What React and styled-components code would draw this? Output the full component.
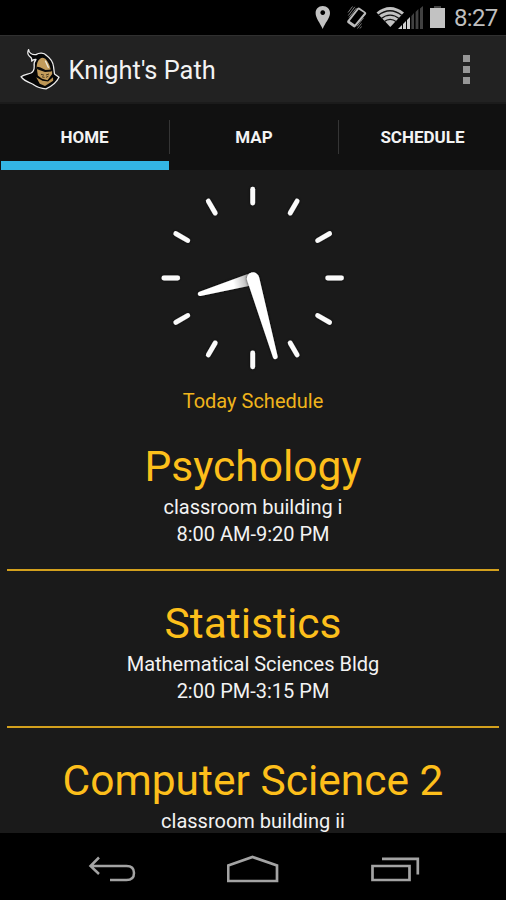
import React from "react";
import styled, { createGlobalStyle } from "styled-components";

const GlobalStyle = createGlobalStyle`
  * { box-sizing: border-box; }
  body { margin: 0; background: #000; font-family: Roboto, "Liberation Sans", sans-serif; }
`;

const Screen = styled.div`
  display: flex;
  flex-direction: column;
  width: 506px;
  height: 900px;
  overflow: hidden;
  background: #1a1a1a;
  color: #f3f3f3;
`;

const StatusBar = styled.header`
  display: flex;
  flex: none;
  align-items: center;
  justify-content: flex-end;
  height: 35px;
  padding-right: 9px;
  background: #000;
`;

const Icon = styled.svg`
  display: block;
  flex: none;
  margin-right: ${(p) => p.$gap || 0}px;
`;

const Time = styled.span`
  width: 43px;
  padding-top: 1px;
  font-size: 24px;
  line-height: 37px;
  letter-spacing: -0.7px;
  white-space: nowrap;
  color: #bebebe;
`;

const ActionBar = styled.div`
  display: flex;
  flex: none;
  align-items: center;
  height: 69px;
  padding: 0 36px 0 20px;
  background: #222;
  border-top: 1px solid #303030;
  border-bottom: 2px solid #1b1b1b;
`;

const AppTitle = styled.h1`
  flex: 1;
  margin: 1px 0 0;
  font-size: 25.4px;
  font-weight: 400;
  line-height: 34px;
  white-space: nowrap;
`;

const Overflow = styled.div`
  display: flex;
  flex-direction: column;
  gap: 4px;
  margin-top: 1px;
`;

const Dot = styled.i`
  width: 7px;
  height: 7px;
  background: #979797;
`;

const Tabs = styled.nav`
  display: grid;
  flex: none;
  grid-template-columns: 169px 169px 168px;
  height: 66px;
  background: #111;
`;

const Tab = styled.div`
  display: flex;
  flex-direction: column;
  justify-content: space-between;
  padding-left: ${(p) => (p.$active ? "1px" : "0")};
`;

const TabLabel = styled.span`
  margin-top: 16px;
  height: 34px;
  font-size: 17px;
  font-weight: 700;
  line-height: 34px;
  text-align: center;
  border-left: ${(p) => (p.$divided ? "1px solid #353535" : "0")};
  margin-right: ${(p) => (p.$divided ? "0" : "1px")};
`;

const TabMarker = styled.span`
  height: 9px;
  background: #33b5e5;
`;

const Content = styled.main`
  display: flex;
  flex: 1;
  flex-direction: column;
  align-items: center;
  min-height: 0;
  overflow: hidden;
  padding: 8px 7px 0;
`;

const Today = styled.h2`
  margin: 11px 0 0;
  font-size: 20px;
  font-weight: 400;
  line-height: 25px;
  color: #f0b41c;
`;

const Entry = styled.section`
  flex: none;
  align-self: stretch;
  height: 157px;
  padding-top: 26px;
  text-align: center;
  border-bottom: 2px solid #d3a01d;
`;

const Course = styled.h3`
  margin: 0;
  font-size: 42.5px;
  font-weight: 400;
  line-height: 54px;
  color: #fdbf1b;
`;

const Detail = styled.p`
  margin: 0;
  font-size: 20px;
  line-height: 27px;
`;

const NavBar = styled.footer`
  display: flex;
  flex: none;
  align-items: center;
  justify-content: space-between;
  height: 67px;
  padding: 4px 86px 0 88px;
  background: #000;
`;

function Knight() {
  return (
    <Icon viewBox="20 48 40 42" width="40" height="42" $gap={8.5}>
      <path d="M28.6 49.6C29 53 32 55 36 54.6C39 52.5 44 52.3 46.5 55.5C50 58 53 62 53.5 66.5L54.5 74L59 77.3C57 81.5 51.5 86.5 46 88.8C40 88.6 36 86.5 32.5 84C28 82.3 23 80 21 76.7C24 74.5 27.5 74.3 31 73C33.8 71.5 34.3 69.5 34.2 66.5C33.8 63.5 34.2 61.5 36 59.5C34 59 32.8 60 31.8 61.2C32.2 58.5 31.2 57.2 29.5 56.2C27.6 54.5 27.6 51.5 28.6 49.6Z" fill="#060606" stroke="#ececec" strokeWidth="1.3" strokeLinejoin="round" />
      <path d="M36.7 67C36.7 62.5 38.8 58.3 42.6 57.8C48 58.5 51.5 64 52 69.5L52.2 74L47.5 80.2L42 78.8L37.8 75.5Z" fill="#c39c5b" />
      <path d="M43 57C49 59 53 64 53 70.5L50.8 71C50.3 65 47.5 60 43 57Z" fill="#0a0a0a" />
      <path d="M45.6 61.2L48.3 67.3" stroke="#f0eadc" strokeWidth="1.4" strokeLinecap="round" />
      <path d="M36.8 66.8L40 67.2L45.5 70L51.8 69.6L51.5 71.5L45 72.1L37.2 69.3Z" fill="#0a0a0a" />
      <path d="M36.2 77.3L42.5 80.8L48 81.4L53 77.2L53.2 80.8L45 86L39.8 83.8Z" fill="#bd9655" />
      <path d="M41 74.3L44 75.2M46 75L49 74M42 76.8L44.5 77.4M46 77.4L48.4 76.2" stroke="#3a2c17" strokeWidth=".9" fill="none" />
    </Icon>
  );
}

function StatusIcons() {
  return (
    <>
      <Icon viewBox="316 5 16 25" width="16" height="25" $gap={15}>
        <path fillRule="evenodd" d="M323.7 6C328 6 331 9 331 13C331 18 326 23 323.7 29C321 23 316.6 18 316.6 13C316.6 9 319.5 6 323.7 6ZM323.7 10.2a2.4 2.4 0 1 0 .1 0Z" fill="#c2c2c2" />
      </Icon>
      <Icon viewBox="347 5 21 25" width="21" height="25" $gap={9}>
        <path fillRule="evenodd" d="M358.5 8Q359.3 7 360.5 7.8L366.5 12Q367.8 13 367 14.2L356.5 26.7Q355.5 28 354.3 27.1L348.7 23Q347.6 22 348.4 20.8ZM359.7 9.5L350.7 21L355.8 24.5L365.2 13Z" fill="#bcbcbc" />
        <path d="M349 12.5L353.5 6.5M349.3 15.5L355.8 6.8M350 17.5L357.5 8M358.5 28.5L362.5 23.5M358 26.3L364.5 18M361 28.5L362.5 26.5" stroke="#999" strokeWidth=".8" />
      </Icon>
      <Icon viewBox="377 5 48 25" width="48" height="25" $gap={6}>
        <path d="M377.5 12.5Q391 1.5 405 12.5L391.3 27Z" fill="#c2c2c2" />
        <path d="M379 15.5Q391 6 403 15.5M382 18.8Q391 11.5 400.5 18.8M385 21.8Q391 17 397.5 21.8" fill="none" stroke="#111" strokeWidth="1.3" />
        <path d="M399 29L403 25V29ZM404 24L407 21V29H404ZM408 20L411 17V29H408Z" fill="#d0d0d0" />
        <path d="M412.4 16L415 13V29H412.4ZM416.6 12L419.4 9V29H416.6ZM421 8.5L424 6V29H421Z" fill="#414141" />
      </Icon>
      <Icon viewBox="431 5 15 25" width="15" height="25" $gap={9}>
        <path d="M435 6H442V8H435Z" fill="#444" />
        <path d="M431 8H446V28H431Z" fill="#c2c2c2" />
      </Icon>
    </>
  );
}

const tickAngles = Array.from({ length: 12 }, (_, i) => i * 30);

function Clock() {
  return (
    <Icon viewBox="0 0 200 200" width="200" height="200">
      <defs>
        <filter id="shadow" filterUnits="userSpaceOnUse" x="0" y="0" width="200" height="200">
          <feDropShadow dx="0" dy="0" stdDeviation="1.6" floodColor="#000" floodOpacity=".8" />
        </filter>
        <linearGradient id="hour" gradientUnits="userSpaceOnUse" x1="80" y1="104" x2="97" y2="100">
          <stop stopColor="#fff" />
          <stop offset="1" stopColor="#aaa" />
        </linearGradient>
      </defs>
      <g stroke="#fafafa" strokeWidth="4.8" strokeLinecap="round" filter="url(#shadow)">
        {tickAngles.map((a) => (
          <path key={a} d="M99.7 11.2V25" transform={`rotate(${a} 99.7 100)`} />
        ))}
      </g>
      <path d="M99 94.5L46.5 113.7A2.2 2.2 0 0 0 47.5 118L98 107.5Z" fill="url(#hour)" filter="url(#shadow)" />
      <path d="M94.2 102.5A6.2 6.2 0 1 1 106.2 99.5L124.6 178.3A2.4 2.4 0 0 1 120 179.6Z" fill="#fff" filter="url(#shadow)" />
    </Icon>
  );
}

const courses = [
  { name: "Psychology", place: "classroom building i", time: "8:00 AM-9:20 PM" },
  { name: "Statistics", place: "Mathematical Sciences Bldg", time: "2:00 PM-3:15 PM" },
  { name: "Computer Science 2", place: "classroom building ii" },
];

export default function App() {
  return (
    <Screen>
      <GlobalStyle />
      <StatusBar>
        <StatusIcons />
        <Time>8:27</Time>
      </StatusBar>
      <ActionBar>
        <Knight />
        <AppTitle>Knight's Path</AppTitle>
        <Overflow><Dot /><Dot /><Dot /></Overflow>
      </ActionBar>
      <Tabs>
        <Tab $active><TabLabel>HOME</TabLabel><TabMarker /></Tab>
        <Tab><TabLabel $divided>MAP</TabLabel></Tab>
        <Tab><TabLabel $divided>SCHEDULE</TabLabel></Tab>
      </Tabs>
      <Content>
        <Clock />
        <Today>Today Schedule</Today>
        {courses.map((c) => (
          <Entry key={c.name}>
            <Course>{c.name}</Course>
            <Detail>{c.place}</Detail>
            {c.time && <Detail>{c.time}</Detail>}
          </Entry>
        ))}
      </Content>
      <NavBar>
        <Icon viewBox="88 854 49 28" width="49" height="28">
          <path d="M99 856.5L90.5 865L99 873M91 865H126.5Q134 865 134 872Q134 879 126.5 879H110" fill="none" stroke="#a3a3a3" strokeWidth="2.5" />
        </Icon>
        <Icon viewBox="227.5 852 54 30" width="54" height="30">
          <path d="M228.7 863.5L253 855L277.5 863.5V879H228.7Z" fill="none" stroke="#a3a3a3" strokeWidth="2.7" />
        </Icon>
        <Icon viewBox="370 854 50 28" width="50" height="28">
          <path d="M372.5 865H409.5V879H372.5ZM382 857.8H417.8V873.5" fill="none" stroke="#a3a3a3" strokeWidth="2.7" />
        </Icon>
      </NavBar>
    </Screen>
  );
}
